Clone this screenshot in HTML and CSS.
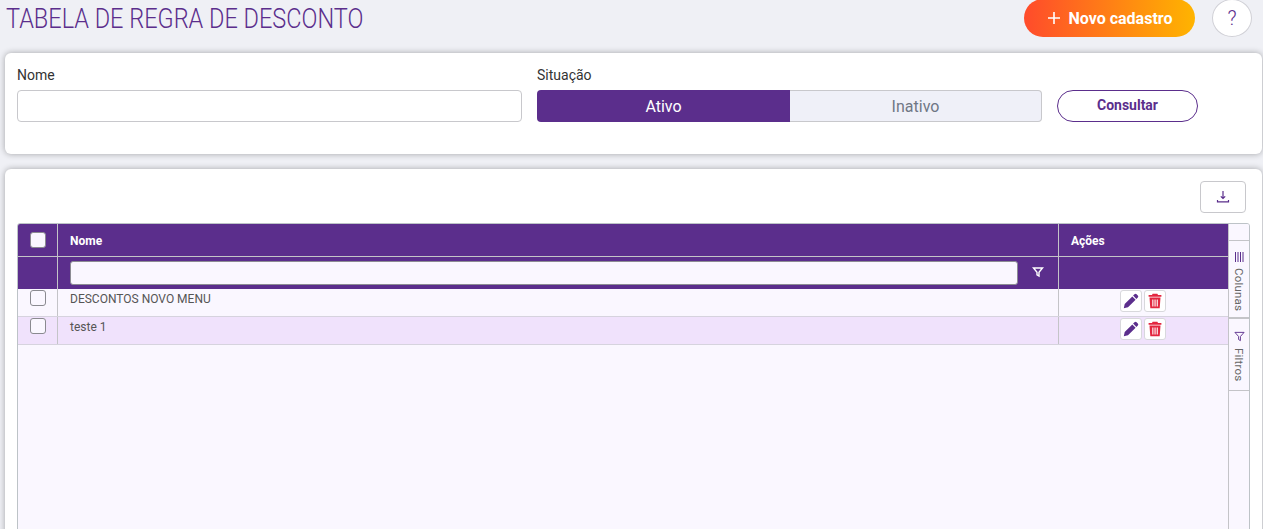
FILE: index.html
```html
<!DOCTYPE html>
<html lang="pt-BR">
<head>
<meta charset="utf-8">
<title>Tabela de regra de desconto</title>
<link rel="stylesheet" href="styles.css">
</head>
<body>
<header class="topbar">
  <h1 class="title">TABELA DE REGRA DE DESCONTO</h1>
  <div class="top-actions">
    <button class="btn-new"><svg width="14" height="14" viewBox="0 0 14 14"><path d="M7 1v12M1 7h12" stroke="#fff" stroke-width="1.6" fill="none"/></svg><span>Novo cadastro</span></button>
    <button class="btn-help">?</button>
  </div>
</header>
<section class="card filters">
  <div class="field field-name">
    <label class="label">Nome</label>
    <input class="input" type="text">
  </div>
  <div class="field field-status">
    <label class="label">Situação</label>
    <div class="toggle"><div class="toggle-on">Ativo</div><div class="toggle-off">Inativo</div></div>
  </div>
  <button class="btn-search">Consultar</button>
</section>
<section class="card results">
  <div class="tools">
    <button class="btn-export"><svg width="14" height="14" viewBox="0 0 14 14" fill="none" stroke="#5b2e8c" stroke-width="1.2"><path d="M7 1v7.500M4.800 6.300 7 8.500l2.200-2.200M1.500 10v1.800h11V10"/></svg></button>
  </div>
  <div class="grid">
    <div class="grid-main">
      <div class="row head">
        <div class="c-check"><span class="check check-head"></span></div>
        <div class="c-name">Nome</div>
        <div class="c-actions">Ações</div>
      </div>
      <div class="row head-filter">
        <div class="c-check"></div>
        <div class="c-name c-filter">
          <input class="filter-input" type="text">
          <svg class="filter-icon" width="12" height="12" viewBox="0 0 12 12" fill="none" stroke="#fff" stroke-width="1.4"><path d="M1.500 2h9L7 6.200V10L5 8.800V6.200z"/></svg>
        </div>
        <div class="c-actions"></div>
      </div>
      <div class="row data">
        <div class="c-check"><span class="check"></span></div>
        <div class="c-name">DESCONTOS NOVO MENU</div>
        <div class="c-actions c-icons">
          <span class="icon-btn"><svg width="16" height="16" viewBox="0 0 16 16"><path fill="#5b2e8c" d="M11.500 1.200a1.500 1.500 0 0 1 2.100 0l1.200 1.200a1.500 1.500 0 0 1 0 2.100l-1.400 1.400-3.300-3.300zM9.300 3.400l3.300 3.300-7.600 7.600-4.200 1 .9-4.300z"/></svg></span>
          <span class="icon-btn"><svg width="14" height="16" viewBox="0 0 14 16"><path fill="#e3263f" fill-rule="evenodd" d="M4.600.8h4.800l.6 1.200h3.400v1.700H.6V2h3.400zM1.500 4.600h11l-.8 10.600H2.300zM4.300 6.500v7h1.100v-7zm2.200 0v7h1.100v-7zm2.200 0v7h1.100v-7z"/></svg></span>
        </div>
      </div>
      <div class="row data selected">
        <div class="c-check"><span class="check"></span></div>
        <div class="c-name">teste 1</div>
        <div class="c-actions c-icons">
          <span class="icon-btn"><svg width="16" height="16" viewBox="0 0 16 16"><path fill="#5b2e8c" d="M11.500 1.200a1.500 1.500 0 0 1 2.100 0l1.200 1.200a1.500 1.500 0 0 1 0 2.100l-1.400 1.400-3.300-3.300zM9.300 3.400l3.300 3.300-7.600 7.600-4.200 1 .9-4.300z"/></svg></span>
          <span class="icon-btn"><svg width="14" height="16" viewBox="0 0 14 16"><path fill="#e3263f" fill-rule="evenodd" d="M4.600.8h4.800l.6 1.200h3.400v1.700H.6V2h3.400zM1.500 4.600h11l-.8 10.600H2.300zM4.300 6.500v7h1.100v-7zm2.200 0v7h1.100v-7zm2.200 0v7h1.100v-7z"/></svg></span>
        </div>
      </div>
    </div>
    <aside class="side">
      <div class="side-gap"></div>
      <div class="side-tab tab-cols">
        <svg width="10" height="10" viewBox="0 0 10 10" stroke="#5b2e8c" stroke-width="1"><path d="M1.500 0v10M4 0v10M6.500 0v10M9 0v10"/></svg>
        <span class="side-text">Colunas</span>
      </div>
      <div class="side-tab tab-filters">
        <svg width="11" height="11" viewBox="0 0 12 12" fill="none" stroke="#5b2e8c" stroke-width="1"><path d="M1 1.500h10L7 6v4.500L5 9.300V6z"/></svg>
        <span class="side-text">Filtros</span>
      </div>
    </aside>
  </div>
</section>
</body>
</html>
```
FILE: styles.css
```css
* { box-sizing: border-box; }
html, body { height: 529px; overflow: hidden; }
body {
  margin: 0;
  padding: 0 1px 0 5px;
  background: #eff0f5;
  font-family: Roboto, "Liberation Sans", sans-serif;
  color: #333;
}
.topbar {
  height: 53px;
  display: flex;
  justify-content: space-between;
  align-items: flex-start;
  margin-left: 1px;
}
.title {
  margin: 3px 0 0;
  font-family: Roboto, sans-serif;
  font-weight: 300;
  font-size: 28px;
  line-height: 32px;
  color: #5b2e8c;
  white-space: nowrap;
  transform: scaleX(.84);
  transform-origin: left center;
}
.top-actions {
  display: flex;
  gap: 17px;
  margin-top: -1px;
  margin-right: 10px;
}
.btn-new {
  width: 171px;
  height: 38px;
  border: 0;
  border-radius: 19px;
  background: linear-gradient(90deg, #ff4b2b, #ffb400);
  color: #fff;
  font: 700 16px Roboto, sans-serif;
  display: flex;
  align-items: center;
  justify-content: center;
  gap: 8px;
  padding: 0;
}
.btn-help {
  width: 40px;
  height: 38px;
  border: 1px solid #d0d0d6;
  border-radius: 50%;
  background: #fff;
  color: #5b2e8c;
  font: 300 20px Roboto, sans-serif;
  padding: 0;
}
.card {
  background: #fff;
  border-radius: 6px;
  box-shadow: 0 0 6px rgba(0, 0, 0, .32);
}
.filters {
  height: 101px;
  display: flex;
  align-items: flex-start;
  padding: 13px 12px 0;
}
.field { display: flex; flex-direction: column; }
.field-name { width: 505px; }
.field-status { width: 505px; margin-left: 15px; }
.label {
  font-size: 14px;
  font-weight: 400;
  line-height: 18px;
  color: #333;
  margin-bottom: 6px;
}
.input {
  height: 32px;
  border: 1px solid #c8c8cc;
  border-radius: 4px;
  background: #fff;
}
.toggle {
  height: 32px;
  display: flex;
  font-size: 16px;
}
.toggle-on, .toggle-off {
  display: flex;
  align-items: center;
  justify-content: center;
}
.toggle-on {
  width: 253px;
  background: #5b2e8c;
  color: #fff;
  border-radius: 4px 0 0 4px;
}
.toggle-off {
  flex: 1;
  background: #eff0f8;
  color: #6f7785;
  border: 1px solid #c8c8cc;
  border-left: 0;
  border-radius: 0 4px 4px 0;
}
.btn-search {
  width: 141px;
  height: 32px;
  margin: 24px 0 0 15px;
  border: 1px solid #5b2e8c;
  border-radius: 16px;
  background: #fff;
  color: #5b2e8c;
  font: 700 14px/28px Roboto, sans-serif;
  padding: 0 0 2px;
}
.results {
  height: 380px;
  margin-top: 15px;
  padding: 12px 12px 0;
}
.tools {
  height: 42px;
  display: flex;
  justify-content: flex-end;
  padding-right: 4px;
}
.btn-export {
  width: 46px;
  height: 32px;
  border: 1px solid #c8c8cc;
  border-radius: 4px;
  background: #fff;
  padding: 0;
  display: flex;
  align-items: center;
  justify-content: center;
}
.grid {
  height: 330px;
  display: flex;
  border: 1px solid #bdc3c7;
  border-radius: 3px 3px 0 0;
  background: #faf7ff;
  font-size: 12px;
  overflow: hidden;
}
.grid-main { flex: 1; min-width: 0; }
.row { display: flex; }
.c-check { width: 40px; flex: none; display: flex; justify-content: center; }
.c-name { flex: 1; min-width: 0; padding-left: 12px; }
.c-actions { width: 169px; flex: none; padding-left: 12px; }
.head, .head-filter {
  background: #5b2e8c;
  color: #fff;
  font-weight: 700;
}
.head { height: 33px; border-bottom: 1px solid #c4c4c8; align-items: stretch; line-height: 34px; }
.head .c-check { align-items: center; }
.head .c-name, .head .c-check, .head-filter .c-check, .head-filter .c-name {
  border-right: 1px solid #c4c4c8;
}
.head-filter { height: 32px; }
.c-filter { display: flex; align-items: flex-start; padding-top: 4px; padding-right: 14px; gap: 14px; }
.filter-input {
  flex: 1;
  min-width: 0;
  height: 24px;
  border: 1px solid #8c8c94;
  border-radius: 3px;
  background: #faf7ff;
}
.filter-icon { margin-top: 5px; flex: none; }
.check {
  width: 16px;
  height: 16px;
  border: 1px solid #8a8a90;
  border-radius: 3px;
  background: #faf7ff;
  display: block;
  margin-top: 1px;
}
.check-head { margin-top: 0; }
.data {
  height: 28px;
  border-bottom: 1px solid #d6d3de;
  color: #555;
  line-height: 21px;
}
.data .c-check, .data .c-name { border-right: 1px solid #c4c4c8; }
.selected { background: #f0e2fc; }
.c-icons { display: flex; justify-content: center; gap: 2px; padding: 1px 2px 0 0; }
.icon-btn {
  width: 22px;
  height: 22px;
  border: 1px solid #d8d8dc;
  border-radius: 3px;
  background: #fff;
  display: flex;
  align-items: center;
  justify-content: center;
}
.side {
  width: 21px;
  flex: none;
  border-left: 1px solid #c4c4c8;
  background: #faf7ff;
  color: #666;
  display: flex;
  flex-direction: column;
}
.side-gap { height: 17px; border-bottom: 1px solid #c4c4c8; }
.side-tab {
  display: flex;
  flex-direction: column;
  align-items: center;
  border-bottom: 1px solid #c4c4c8;
  padding-top: 11px;
  gap: 6px;
}
.tab-cols { height: 78px; border-bottom-width: 2px; }
.tab-filters { height: 72px; padding-top: 12px; }
.side-text {
  writing-mode: vertical-rl;
  font-size: 11.500px;
  line-height: 14px;
  letter-spacing: .2px;
}
```
